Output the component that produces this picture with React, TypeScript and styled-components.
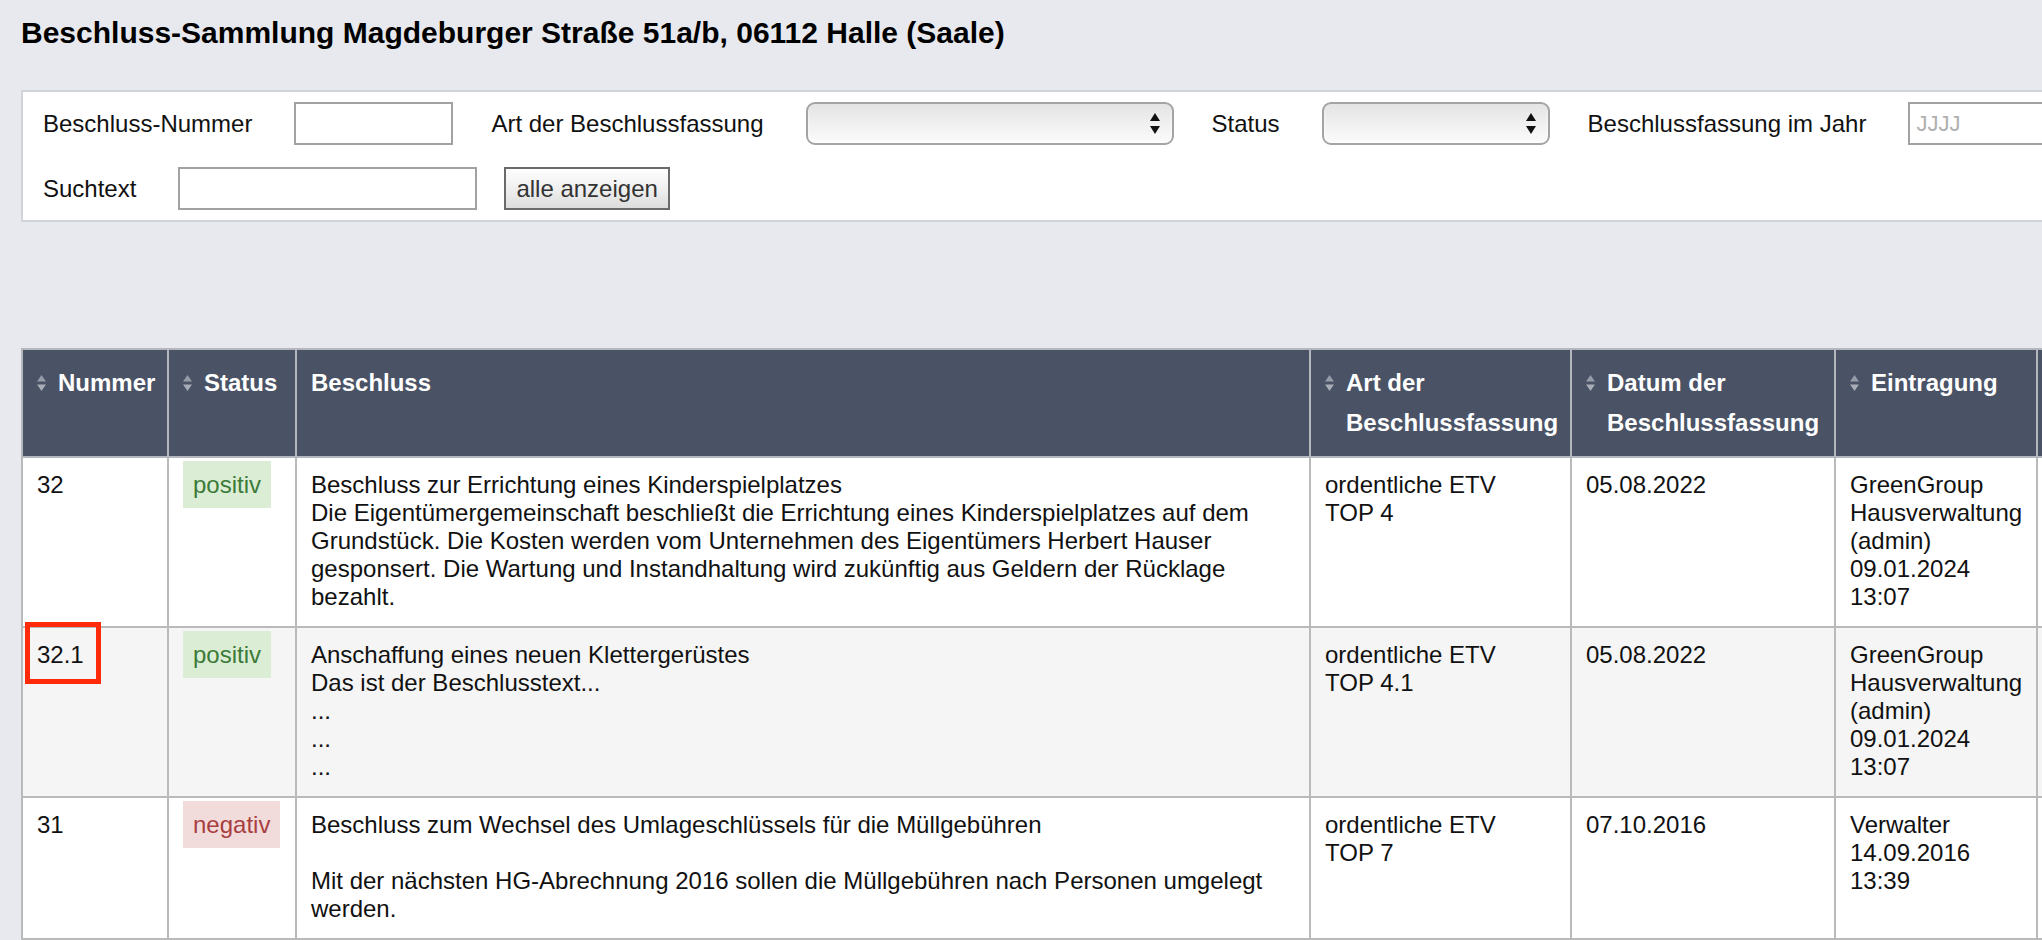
import React from 'react';
import styled, { createGlobalStyle, css } from 'styled-components';

const GlobalStyle = createGlobalStyle`
  html, body {
    margin: 0;
    padding: 0;
    overflow: hidden;
    background: #e8e9ee;
  }
  body {
    font-family: 'Liberation Sans', Arial, Helvetica, sans-serif;
    font-size: 24px;
    color: #111;
  }
  * {
    box-sizing: border-box;
  }
`;

const Page = styled.div`
  padding: 16px 0 0 21px;
  width: max-content;
`;

const Heading = styled.h1`
  margin: 0;
  font-size: 30px;
  line-height: 34px;
  font-weight: 700;
  color: #000;
`;

const FilterPanel = styled.form`
  margin-top: 40px;
  width: 2100px;
  background: #fff;
  border: 2px solid #cfd3dc;
  padding: 10px 20px;
  display: flex;
  flex-direction: column;
  gap: 22px;
`;

const FilterRow = styled.div`
  display: flex;
  align-items: center;
`;

const Label = styled.label`
  margin-right: 42px;
  line-height: 28px;
  white-space: nowrap;
  color: #111;
`;

const fieldBox = css<{ $w: number }>`
  width: ${({ $w }) => $w}px;
  height: 43px;
  margin-right: 38px;
  flex-shrink: 0;
`;

const TextInput = styled.input<{ $w: number }>`
  ${fieldBox};
  border: 2px solid #a2a2a2;
  background: #fff;
  font-family: inherit;
  font-size: 22px;
  padding: 0 6px;
  outline: none;
  &::placeholder {
    color: #b0b0b0;
  }
`;

const SelectBox = styled.div<{ $w: number }>`
  ${fieldBox};
  border: 2px solid #a4a4a4;
  border-radius: 9px;
  background: linear-gradient(#e4e4e4, #f1f1f1 55%, #fbfbfb);
  box-shadow: inset 0 -2px 3px rgba(255, 255, 255, 0.9);
  display: flex;
  align-items: center;
  justify-content: flex-end;
  padding-right: 12px;
`;

const Button = styled.button`
  height: 43px;
  padding: 0 10px;
  border: 2px solid #6a6a6a;
  background: linear-gradient(#fefefe, #ececec 60%, #dcdcdc);
  font-family: inherit;
  font-size: 24px;
  color: #333;
  margin-left: -11px;
`;

const Table = styled.table`
  margin-top: 126px;
  border-collapse: collapse;
  table-layout: fixed;
  width: 2218px;
  border: 2px solid #bababa;
  background: #fff;
`;

const HeadCell = styled.th<{ $w: number }>`
  width: ${({ $w }) => $w}px;
  background: #4a5366;
  color: #fff;
  font-weight: 700;
  font-size: 24px;
  line-height: 40px;
  text-align: left;
  vertical-align: top;
  padding: 13px 14px;
  border: 2px solid #b4b7bd;
`;

const HeadInner = styled.div`
  display: flex;
  align-items: flex-start;
  gap: 12px;
  white-space: nowrap;
`;

const SortIcon = styled.svg`
  flex-shrink: 0;
  margin-top: 12px;
`;

const Row = styled.tr<{ $alt?: boolean }>`
  background: ${({ $alt }) => ($alt ? '#f5f5f5' : '#fff')};
`;

const Cell = styled.td`
  padding: 13px 14px 15px;
  line-height: 28px;
  vertical-align: top;
  border: 2px solid #bababa;
  white-space: nowrap;
  color: #111;
`;

const Badge = styled.span<{ $status: 'positiv' | 'negativ' }>`
  padding: 10px;
  ${({ $status }) =>
    $status === 'positiv'
      ? css`
          background: #dbeed5;
          color: #3b7a39;
        `
      : css`
          background: #f2dbdb;
          color: #a8403f;
        `};
`;

const Marked = styled.span`
  position: relative;
  &::after {
    content: '';
    position: absolute;
    left: -12px;
    right: -17px;
    top: -19px;
    bottom: -16px;
    border: 5px solid #ff2a0a;
  }
`;

const SortArrows = () => (
  <SortIcon width="9" height="16" viewBox="0 0 9 16">
    <polygon points="4.5,0 9,6.5 0,6.5" fill="#959ba7" />
    <polygon points="0,9.5 9,9.5 4.5,16" fill="#a7acb5" />
  </SortIcon>
);

const SelectArrows = () => (
  <svg width="10" height="21" viewBox="0 0 10 21">
    <polygon points="5,0 10,8 0,8" fill="#111" />
    <polygon points="0,13 10,13 5,21" fill="#111" />
  </svg>
);

type Beschluss = {
  nr: string;
  status: 'positiv' | 'negativ';
  text: string[];
  art: string[];
  datum: string;
  eintrag: string[];
  marked?: boolean;
};

const rows: Beschluss[] = [
  {
    nr: '32',
    status: 'positiv',
    text: [
      'Beschluss zur Errichtung eines Kinderspielplatzes',
      'Die Eigentümergemeinschaft beschließt die Errichtung eines Kinderspielplatzes auf dem',
      'Grundstück. Die Kosten werden vom Unternehmen des Eigentümers Herbert Hauser',
      'gesponsert. Die Wartung und Instandhaltung wird zukünftig aus Geldern der Rücklage',
      'bezahlt.',
    ],
    art: ['ordentliche ETV', 'TOP 4'],
    datum: '05.08.2022',
    eintrag: ['GreenGroup', 'Hausverwaltung', '(admin)', '09.01.2024', '13:07'],
  },
  {
    nr: '32.1',
    status: 'positiv',
    text: ['Anschaffung eines neuen Klettergerüstes', 'Das ist der Beschlusstext...', '...', '...', '...'],
    art: ['ordentliche ETV', 'TOP 4.1'],
    datum: '05.08.2022',
    eintrag: ['GreenGroup', 'Hausverwaltung', '(admin)', '09.01.2024', '13:07'],
    marked: true,
  },
  {
    nr: '31',
    status: 'negativ',
    text: [
      'Beschluss zum Wechsel des Umlageschlüssels für die Müllgebühren',
      '',
      'Mit der nächsten HG-Abrechnung 2016 sollen die Müllgebühren nach Personen umgelegt',
      'werden.',
    ],
    art: ['ordentliche ETV', 'TOP 7'],
    datum: '07.10.2016',
    eintrag: ['Verwalter', '14.09.2016', '13:39'],
  },
];

const Lines = ({ items }: { items: string[] }) => (
  <>
    {items.map((line, i) => (
      <React.Fragment key={i}>
        {i > 0 && <br />}
        {line}
      </React.Fragment>
    ))}
  </>
);

const columns = [
  { title: ['Nummer'], w: 146, sort: true },
  { title: ['Status'], w: 128, sort: true },
  { title: ['Beschluss'], w: 1014, sort: false },
  { title: ['Art der', 'Beschlussfassung'], w: 261, sort: true },
  { title: ['Datum der', 'Beschlussfassung'], w: 264, sort: true },
  { title: ['Eintragung'], w: 202, sort: true },
  { title: [''], w: 203, sort: false },
];

const App: React.FC = () => (
  <Page>
    <GlobalStyle />
    <Heading>Beschluss-Sammlung Magdeburger Straße 51a/b, 06112 Halle (Saale)</Heading>

    <FilterPanel onSubmit={(e) => e.preventDefault()}>
      <FilterRow>
        <Label>Beschluss-Nummer</Label>
        <TextInput $w={159} />
        <Label>Art der Beschlussfassung</Label>
        <SelectBox $w={368}>
          <SelectArrows />
        </SelectBox>
        <Label>Status</Label>
        <SelectBox $w={228}>
          <SelectArrows />
        </SelectBox>
        <Label>Beschlussfassung im Jahr</Label>
        <TextInput $w={160} placeholder="JJJJ" />
      </FilterRow>
      <FilterRow>
        <Label>Suchtext</Label>
        <TextInput $w={299} />
        <Button type="button">alle anzeigen</Button>
      </FilterRow>
    </FilterPanel>

    <Table>
      <thead>
        <tr>
          {columns.map((col, i) => (
            <HeadCell key={i} $w={col.w}>
              <HeadInner>
                {col.sort && <SortArrows />}
                <span>
                  <Lines items={col.title} />
                </span>
              </HeadInner>
            </HeadCell>
          ))}
        </tr>
      </thead>
      <tbody>
        {rows.map((row, i) => (
          <Row key={row.nr} $alt={i % 2 === 1}>
            <Cell>{row.marked ? <Marked>{row.nr}</Marked> : row.nr}</Cell>
            <Cell>
              <Badge $status={row.status}>{row.status}</Badge>
            </Cell>
            <Cell>
              <Lines items={row.text} />
            </Cell>
            <Cell>
              <Lines items={row.art} />
            </Cell>
            <Cell>{row.datum}</Cell>
            <Cell>
              <Lines items={row.eintrag} />
            </Cell>
            <Cell />
          </Row>
        ))}
      </tbody>
    </Table>
  </Page>
);

export default App;
